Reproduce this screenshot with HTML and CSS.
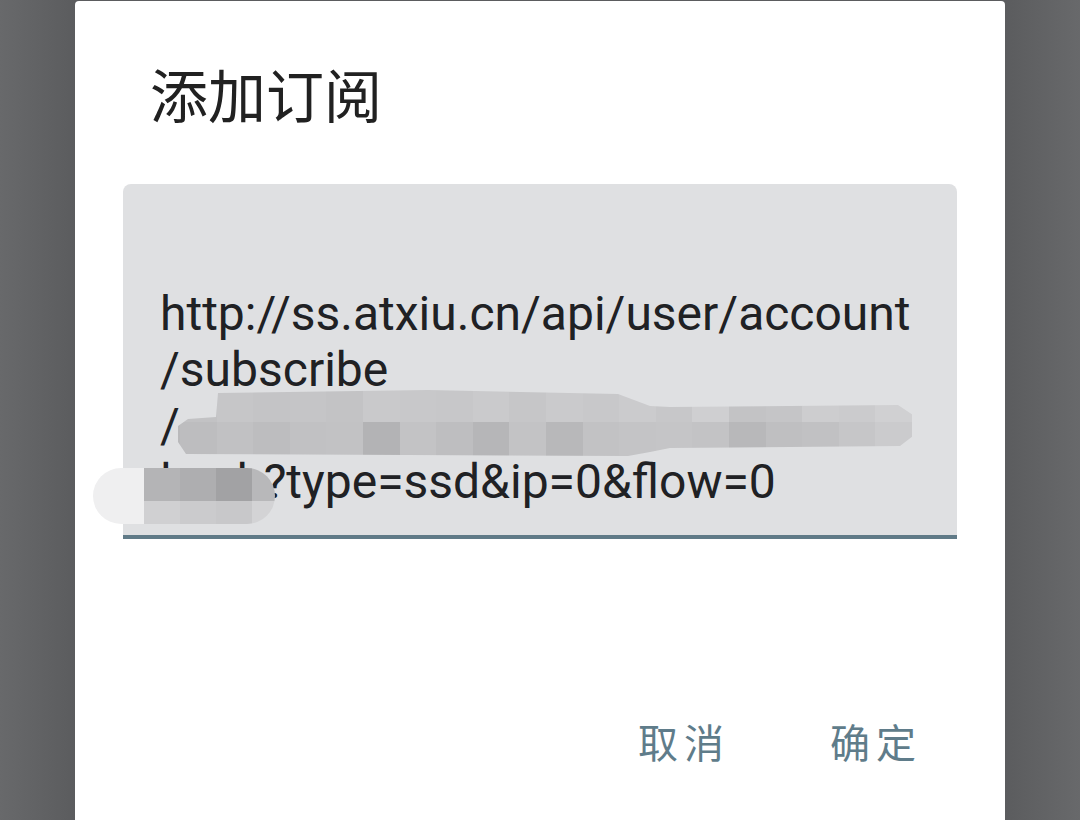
FILE: index.html
```html
<!DOCTYPE html>
<html lang="zh">
<head>
<meta charset="utf-8">
<title>添加订阅</title>
<link rel="stylesheet" href="styles.css">
</head>
<body>
<div class="scrim">
  <div class="dialog">
    <h1 class="title">添加订阅</h1>
    <div class="field">
      <div class="value">
        <div class="line">http://ss.atxiu.cn/api/user/account</div>
        <div class="line">/subscribe</div>
        <div class="line">/</div>
        <div class="line">l<span class="spacer"></span>b?type=ssd&amp;ip=0&amp;flow=0</div>
      </div>
      <div class="mosaic m1">
        <span style="background:#c4c4c6"></span><span style="background:#c2c2c4"></span><span style="background:#c6c6c8"></span><span style="background:#c4c4c6"></span><span style="background:#c5c5c7"></span><span style="background:#c3c3c5"></span><span style="background:#c9c9cb"></span><span style="background:#c8c8ca"></span><span style="background:#c7c7c9"></span><span style="background:#cacacc"></span><span style="background:#c6c6c8"></span><span style="background:#cacacc"></span><span style="background:#c8c8ca"></span><span style="background:#cbcbcd"></span><span style="background:#c7c7c9"></span><span style="background:#cfcfd1"></span><span style="background:#c3c3c5"></span><span style="background:#c5c5c7"></span><span style="background:#cdcdcf"></span><span style="background:#cbcbcd"></span><span style="background:#d0d0d2"></span>
        <span style="background:#b9b9bb"></span><span style="background:#bdbdbf"></span><span style="background:#c1c1c3"></span><span style="background:#bdbdbf"></span><span style="background:#c1c1c3"></span><span style="background:#c2c2c4"></span><span style="background:#b3b3b5"></span><span style="background:#c3c3c5"></span><span style="background:#bebec0"></span><span style="background:#b6b6b8"></span><span style="background:#c3c3c5"></span><span style="background:#b8b8ba"></span><span style="background:#c2c2c4"></span><span style="background:#c4c4c6"></span><span style="background:#c5c5c7"></span><span style="background:#c3c3c5"></span><span style="background:#b8b8ba"></span><span style="background:#bfbfc1"></span><span style="background:#c1c1c3"></span><span style="background:#c6c6c8"></span><span style="background:#cbcbcd"></span>
      </div>
      <div class="mosaic m2">
        <span style="background:#efeff0"></span><span style="background:#b4b4b6"></span><span style="background:#aeaeb0"></span><span style="background:#a2a2a4"></span><span style="background:#b8b8ba"></span>
        <span style="background:#efeff0"></span><span style="background:#d0d0d2"></span><span style="background:#cbcbcd"></span><span style="background:#c8c8ca"></span><span style="background:#d3d3d5"></span>
      </div>
    </div>
    <div class="actions">
      <button class="btn">取消</button>
      <button class="btn">确定</button>
    </div>
  </div>
</div>
</body>
</html>
```
FILE: styles.css
```css
html, body {
  margin: 0;
  padding: 0;
  height: 100%;
  overflow: hidden;
}
body {
  font-family: Roboto, "Noto Sans CJK SC", sans-serif;
}
.scrim {
  height: 820px;
  background: linear-gradient(90deg, #68696b 0%, #5b5c5e 7%, #5b5c5e 93%, #68696b 100%);
  padding-top: 1px;
  box-sizing: border-box;
}
.dialog {
  margin-left: 75px;
  width: 930px;
  height: 840px;
  background: #ffffff;
  border-radius: 4px;
  box-sizing: border-box;
  padding: 0 48px;
}
.title {
  margin: 0;
  padding: 57px 0 0 27px;
  font-family: "Noto Sans CJK SC", sans-serif;
  font-weight: 400;
  font-size: 58px;
  line-height: 70px;
  color: #212121;
}
.field {
  position: relative;
  margin-top: 56px;
  height: 355px;
  background: #dfe0e2;
  border-radius: 8px 8px 0 0;
  border-bottom: 4px solid #607a87;
  box-sizing: border-box;
}
.value {
  padding: 102px 37px 0;
  font-size: 48px;
  line-height: 56px;
  color: #202124;
}
.line {
  white-space: nowrap;
}
.spacer {
  display: inline-block;
  width: 65px;
}
.mosaic {
  position: absolute;
  display: grid;
  overflow: hidden;
}
.mosaic span {
  display: block;
}
.m1 {
  left: 55px;
  top: 206px;
  width: 735px;
  height: 66px;
  grid-template-columns: 2px repeat(20, 36.6px);
  grid-template-rows: 32px 34px;
  clip-path: polygon(40px 3px, 250px 0, 440px 4px, 472px 16px, 492px 17px, 720px 15px, 735px 25px, 735px 46px, 722px 56px, 492px 58px, 472px 62px, 450px 66px, 8px 64px, 0 52px, 0 36px, 10px 29px, 38px 27px);
}
.m2 {
  left: -30px;
  top: 284px;
  width: 182px;
  height: 56px;
  grid-template-columns: 51px 36px 36px 36px 23px;
  grid-template-rows: 33px 23px;
  border-radius: 28px;
}
.actions {
  display: flex;
  justify-content: flex-end;
  gap: 92px;
  margin-top: 169px;
  padding-right: 31px;
}
.btn {
  border: 0;
  background: transparent;
  padding: 8px 4px;
  font-family: "Noto Sans CJK SC", sans-serif;
  font-size: 40px;
  line-height: 50px;
  letter-spacing: 6px;
  color: #5f7c8a;
}
```
